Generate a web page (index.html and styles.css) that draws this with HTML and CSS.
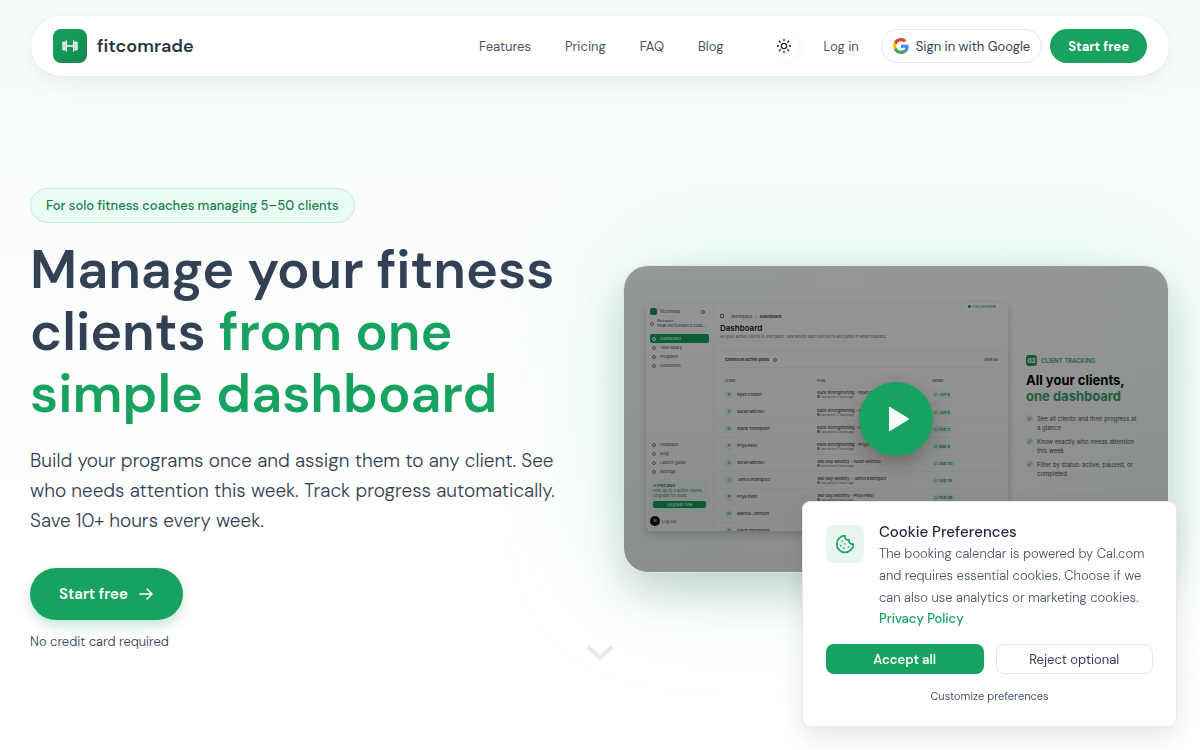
FILE: index.html
```html
<!DOCTYPE html>
<html lang="en">
<head>
<meta charset="utf-8">
<meta name="viewport" content="width=device-width, initial-scale=1">
<title>fitcomrade</title>
<link rel="stylesheet" href="styles.css">
</head>
<body>
<header class="nav">
  <a class="brand" href="#">
    <span class="brand-mark">
      <svg width="18" height="14" viewBox="0 0 18 14" fill="none" stroke="#fff" stroke-width="1.3" stroke-linejoin="round" stroke-linecap="round"><path d="M6 7h6"/><path d="M2 3.500h2v7H2z M14 3.500h2v7h-2z" fill="#fff" fill-opacity=".3"/><path d="M5.300 2v10M12.700 2v10"/></svg>
    </span>
    <span>fitcomrade</span>
  </a>
  <nav class="links">
    <a href="#">Features</a>
    <a href="#">Pricing</a>
    <a href="#">FAQ</a>
    <a href="#">Blog</a>
  </nav>
  <div class="actions">
    <button class="theme" type="button" aria-label="Toggle theme">
      <svg width="16" height="16" viewBox="0 0 24 24" fill="none" stroke="#1e293b" stroke-width="2" stroke-linecap="round"><circle cx="12" cy="12" r="4"/><path d="M12 2v2M12 20v2M4.900 4.900l1.400 1.400M17.700 17.700l1.400 1.400M2 12h2M20 12h2M4.900 19.100l1.400-1.400M17.700 6.300l1.400-1.400"/></svg>
    </button>
    <a class="login" href="#">Log in</a>
    <button class="google" type="button">
      <svg width="16" height="16" viewBox="0 0 24 24"><path fill="#4285F4" d="M23.500 12.300c0-.9-.1-1.500-.2-2.200H12v4.500h6.600c-.1 1.100-.9 2.800-2.500 3.900l3.900 3c2.200-2.100 3.500-5.200 3.500-9.200z"/><path fill="#34A853" d="M12 24c3.200 0 6-1.100 7.900-2.900l-3.800-3c-1 .7-2.400 1.200-4.100 1.200-3.200 0-5.900-2.100-6.800-5l-4 3.100C3.200 21.300 7.300 24 12 24z"/><path fill="#FBBC05" d="M5.200 14.300c-.2-.7-.4-1.500-.4-2.300s.1-1.600.4-2.300l-4-3.100C.4 8.200 0 10.100 0 12s.5 3.800 1.300 5.400z"/><path fill="#EA4335" d="M12 4.700c2.300 0 3.800 1 4.700 1.800l3.400-3.300C18 1.200 15.200 0 12 0 7.300 0 3.200 2.700 1.300 6.600l4 3.100c.9-2.900 3.500-5 6.700-5z"/></svg>
      <span>Sign in with Google</span>
    </button>
    <a class="start-small" href="#">Start free</a>
  </div>
</header>

<main class="hero">
  <section class="copy">
    <p class="badge">For solo fitness coaches managing 5–50 clients</p>
    <h1>Manage your fitness clients <em>from one simple dashboard</em></h1>
    <p class="lead">Build your programs once and assign them to any client. See who needs attention this week. Track progress automatically. Save 10+ hours every week.</p>
    <a class="start" href="#">Start free
      <svg width="16" height="16" viewBox="0 0 16 16" fill="none" stroke="#fff" stroke-width="1.500" stroke-linecap="round" stroke-linejoin="round"><path d="M2 8h12M9 3l5 5-5 5"/></svg>
    </a>
    <p class="note">No credit card required</p>
  </section>

  <section class="poster" aria-label="Product video">
    <div class="scene">
      <div class="app">
        <aside class="side">
          <div class="side-brand"><i class="logo"></i>fitcomrade<i class="dot"></i></div>
          <div class="side-team"><i class="dot"></i><div><small>Workspace</small>Peak Performance Coac...</div></div>
          <div class="side-item active"><i class="dot"></i>Dashboard</div>
          <div class="side-item"><i class="dot"></i>Task library</div>
          <div class="side-item"><i class="dot"></i>Programs</div>
          <div class="side-item"><i class="dot"></i>Customers</div>
          <div class="side-foot">
            <div class="side-item"><i class="dot"></i>Feedback</div>
            <div class="side-item"><i class="dot"></i>Blog</div>
            <div class="side-item"><i class="dot"></i>Launch guide</div>
            <div class="side-item"><i class="dot"></i>Settings</div>
            <div class="plan">
              <b>✧ Free plan</b>
              <span>Free up to 3 active clients. Upgrade for more.</span>
              <div class="upgrade">Upgrade now</div>
            </div>
            <div class="side-user"><i>N</i>Log out</div>
          </div>
        </aside>
        <div class="main">
          <div class="crumbs"><i class="box"></i>Workspace <span>/</span> <b>Dashboard</b></div>
          <div class="main-title">Dashboard</div>
          <div class="main-sub">All your active clients in one place. See where each person is and jump in when needed.</div>
          <div class="main-head"><b>Clients on active plans</b><i class="dot"></i><span>View all</span></div>
          <table class="rows">
            <thead><tr><th>CLIENT</th><th>PLAN</th><th>ENDING</th></tr></thead>
            <tbody>
              <tr><td><i>R</i>Ryan Cooper</td><td>Back Strengthening - Ryan Cooper<small>● Last active 2 hours ago</small></td><td><u>☑ Jun 9</u></td></tr>
              <tr><td><i>S</i>Sarah Mitchell</td><td>Back Strengthening - Sarah Mitchell<small>● Last active 2 hours ago</small></td><td><u>☑ Jun 9</u></td></tr>
              <tr><td><i>D</i>David Thompson</td><td>Back Strengthening - David Thomp<small>● Last active 2 hours ago</small></td><td><u>☑ Feb 11</u></td></tr>
              <tr><td><i>P</i>Priya Patel</td><td>Back Strengthening - Priya Patel<small>● Last active 2 hours ago</small></td><td><u>☑ Mar 9</u></td></tr>
              <tr><td><i>S</i>Sarah Mitchell</td><td>360 Day Mobility - Sarah Mitchell<small>● Last active 2 hours ago</small></td><td><u>☑ Sep 30</u></td></tr>
              <tr><td><i>J</i>James Rodriguez</td><td>360 Day Mobility - James Rodriguez<small>● Last active 2 hours ago</small></td><td><u>☑ Sep 19</u></td></tr>
              <tr><td><i>P</i>Priya Patel</td><td>360 Day Mobility - Priya Patel<small>● Last active 2 hours ago</small></td><td><u>☑ Feb 26</u></td></tr>
              <tr><td><i>M</i>Marcus Johnson</td><td></td><td></td></tr>
              <tr><td><i>D</i>David Thompson</td><td></td><td></td></tr>
            </tbody>
          </table>
        </div>
        <div class="live">● Live preview</div>
      </div>
      <div class="pitch">
        <div class="step"><b>02</b>CLIENT TRACKING</div>
        <h2>All your clients,<br><em>one dashboard</em></h2>
        <ul>
          <li>See all clients and their progress at a glance</li>
          <li>Know exactly who needs attention this week</li>
          <li>Filter by status: active, paused, or completed</li>
        </ul>
      </div>
    </div>
    <button class="play" type="button" aria-label="Play video">
      <svg width="22" height="26" viewBox="0 0 22 26"><path d="M1 1.500v23q0 1 1 .5L20.500 13.700q1-.7 0-1.400L2 1q-1-.5-1 .5z" fill="#fff"/></svg>
    </button>
  </section>
  <svg class="more" width="28" height="18" viewBox="0 0 28 18" fill="none" stroke="#e8eaea" stroke-width="4"><path d="M2 3l12 11L26 3"/></svg>
</main>

<section class="cookie" aria-labelledby="cookie-title">
  <div class="cookie-top">
    <span class="cookie-icon">
      <svg width="20" height="20" viewBox="0 0 24 24" fill="none" stroke="#16a35f" stroke-width="2" stroke-linecap="round" stroke-linejoin="round"><path d="M12 2a10 10 0 1 0 10 10 4 4 0 0 1-5-5 4 4 0 0 1-5-5"/><path d="M8.500 8.500v.01M16 15.500v.01M12 12v.01M11 17v.01M7 14v.01"/></svg>
    </span>
    <div>
      <h3 id="cookie-title">Cookie Preferences</h3>
      <p>The booking calendar is powered by Cal.com and requires essential cookies. Choose if we can also use analytics or marketing cookies.</p>
      <a href="#">Privacy Policy</a>
    </div>
  </div>
  <div class="cookie-buttons">
    <button class="accept" type="button">Accept all</button>
    <button class="reject" type="button">Reject optional</button>
  </div>
  <button class="customize" type="button">Customize preferences</button>
</section>
</body>
</html>
```
FILE: styles.css
```css
* { box-sizing: border-box; }

body {
  margin: 0;
  min-height: 100vh;
  font-family: "DM Sans", Inter, "Open Sans", sans-serif;
  font-variant-ligatures: none;
  color: #334155;
  background: linear-gradient(#f5faf9 0, #fafdfc 200px, #fdfefe 400px, #fff 600px) no-repeat;
}

h1, h2, h3, p, ul { margin: 0; }
a { color: inherit; text-decoration: none; }
button { font: inherit; color: inherit; cursor: pointer; }
em, i { font-style: normal; }

/* Navigation */
.nav {
  margin: 16px 31px 0;
  height: 60px;
  padding: 0 22px;
  display: flex;
  align-items: center;
  background: #fff;
  border-radius: 30px;
  box-shadow: 0 8px 20px rgba(15, 60, 50, .06), 0 0 1px rgba(15, 60, 50, .15);
  font-size: 13px;
  color: #475569;
}
.brand {
  display: flex;
  align-items: center;
  gap: 10px;
  margin-right: auto;
  font-size: 18px;
  font-weight: 600;
  color: #283548;
}
.brand-mark {
  width: 34px;
  height: 34px;
  display: grid;
  place-items: center;
  border-radius: 8px;
  background: linear-gradient(135deg, #16a35f, #15884f);
}
.links { display: flex; gap: 34px; margin-right: 46px; }
.actions { display: flex; align-items: center; }
.theme {
  width: 30px;
  height: 30px;
  padding: 0;
  margin-right: 24px;
  display: grid;
  place-items: center;
  border: 0;
  border-radius: 15px;
  background: none;
  box-shadow: 2px 2px 4px rgba(80, 90, 130, .04);
}
.login { margin-right: 22px; }
.google {
  height: 34px;
  padding: 0 11px;
  margin-right: 8px;
  display: flex;
  align-items: center;
  gap: 7px;
  border: 1px solid #e2e8f0;
  border-radius: 17px;
  background: #fff;
  color: #334155;
}
.start-small {
  height: 34px;
  padding: 0 18px;
  display: flex;
  align-items: center;
  border-radius: 17px;
  background: #18a25f;
  color: #fff;
  font-weight: 700;
}

/* Hero */
.hero {
  position: relative;
  padding: 112px 32px 98px 30px;
  display: grid;
  grid-template-columns: 1fr 1fr;
  gap: 50px;
  align-items: center;
}
.copy { display: flex; flex-direction: column; align-items: flex-start; }
.badge {
  padding: 0 15px;
  border: 1px solid #c5ebd9;
  border-radius: 18px;
  background: #eafbf3;
  color: #15804c;
  font-size: 13px;
  font-weight: 500;
  line-height: 33px;
}
h1 {
  margin-top: 16px;
  font-size: 54px;
  font-weight: 600;
  line-height: 62px;
}
h1 em { color: #18a25f; }
.lead {
  max-width: 540px;
  margin-top: 21px;
  font-size: 19px;
  font-weight: 300;
  line-height: 30px;
  color: #334155;
}
.start {
  height: 52px;
  margin-top: 32px;
  padding: 0 29px;
  display: flex;
  align-items: center;
  gap: 10px;
  border-radius: 26px;
  background: #18a25f;
  box-shadow: 0 6px 12px rgba(24, 162, 95, .25);
  color: #fff;
  font-size: 15px;
  font-weight: 600;
}
.note { margin-top: 14px; font-size: 13px; font-weight: 300; line-height: 16px; color: #334155; }
.more { position: absolute; left: calc(50% - 14px); bottom: 86px; }

/* Video poster */
.poster {
  position: relative;
  aspect-ratio: 16 / 9;
  border-radius: 24px;
  box-shadow: 0 0 0 1px #e0e8e6, 0 20px 40px rgba(20, 60, 45, .2), 0 0 120px rgba(120, 220, 175, .28);
}
.scene {
  height: 100%;
  padding: 37px 22px 41px;
  display: flex;
  gap: 18px;
  overflow: hidden;
  position: relative;
  border-radius: 24px;
  background: linear-gradient(100deg, #edf6f5, #f3f3f3 45%, #f3f3f3 70%, #e8f4ee);
  font-family: Inter, sans-serif;
  font-size: 4px;
  line-height: 5px;
  color: #444;
}
.scene::after {
  content: "";
  position: absolute;
  inset: 0;
  background: linear-gradient(rgba(0, 0, 0, .38), rgba(0, 0, 0, .42));
}
.app {
  position: relative;
  flex: 0 0 362px;
  display: flex;
  border-radius: 4px;
  background: #eff0f0;
  box-shadow: 0 3px 8px rgba(0, 0, 0, .2);
}
.dot { flex: none; width: 4px; height: 4px; border: 1px solid #777; border-radius: 2px; }
.side { width: 68px; padding: 5px 4px; display: flex; flex-direction: column; border-right: 1px solid #e6e9e8; }
.side-brand { display: flex; align-items: center; gap: 3px; }
.side-brand .dot { margin: 0 4px 0 auto; }
.logo { width: 7px; height: 7px; border-radius: 2px; background: #168a52; }
.side-team { display: flex; align-items: center; gap: 3px; height: 12px; margin: 3px 0 4px; white-space: nowrap; }
.side-team small { display: block; font-size: 3px; line-height: 3px; }
.side-item { display: flex; align-items: center; gap: 4px; height: 9px; padding: 0 2px; border-radius: 2px; }
.side-item.active { background: #12975a; color: #fff; }
.side-item.active .dot { border-color: #fff; }
.side-foot { margin-top: auto; }
.plan { margin: 3px 0 4px; padding: 4px 3px; border-radius: 3px; background: #e2f1e9; color: #43705a; }
.plan b, .plan span { display: block; }
.upgrade { margin-top: 3px; line-height: 7px; border-radius: 2px; background: #12975a; color: #fff; text-align: center; }
.side-user { display: flex; align-items: center; gap: 2px; }
.side-user i { width: 10px; line-height: 10px; border-radius: 5px; background: #111; color: #fff; text-align: center; }
.main { flex: 1; min-width: 0; padding: 11px 5px 0 6px; overflow: hidden; }
.crumbs { display: flex; gap: 3px; }
.box { width: 4px; height: 4px; border: 1px solid #777; margin-right: 4px; }
.main-title { margin-top: 4px; font-size: 8px; line-height: 10px; font-weight: 600; color: #111; }
.main-sub { line-height: 7px; color: #666; }
.main-head { display: flex; align-items: center; gap: 4px; margin-top: 11px; height: 16px; padding: 0 5px; border-top: 1px solid #e5e9e8; }
.main-head span { margin-left: auto; }
.rows { width: 100%; border-collapse: collapse; table-layout: fixed; white-space: nowrap; }
.rows th { height: 19px; padding: 8px 5px 0; text-align: left; font-size: 3px; font-weight: 500; border-top: 1px solid #e5e9e8; }
.rows th:nth-child(1) { width: 92px; }
.rows th:nth-child(2) { width: 115px; }
.rows td { height: 17px; padding: 0 5px; border-bottom: 1px solid #e6e8e7; font-weight: 500; }
.rows i { display: inline-block; width: 8px; margin-right: 4px; line-height: 8px; border-radius: 4px; background: #d9ebe2; color: #3a8a63; text-align: center; }
.rows small { display: block; font-size: 3px; line-height: 4px; color: #777; }
.rows u { text-decoration: none; padding: 1px 2px; border-radius: 3px; background: #dcefe5; color: #187a4b; }
.live { position: absolute; right: 9px; top: 0; padding: 1px 3px; border-radius: 4px; background: #f2f8f5; color: #168a52; }
.pitch { flex: 1; padding-top: 52px; }
.step { display: flex; align-items: center; gap: 4px; font-size: 6px; line-height: 11px; font-weight: 600; color: #3e9b6f; white-space: nowrap; }
.step b { width: 11px; border-radius: 3px; background: #23935c; color: #e6f5ed; text-align: center; }
.pitch h2 { margin-top: 6px; font-size: 13px; line-height: 16px; font-weight: 700; color: #000; white-space: nowrap; }
.pitch h2 em { color: #2f9a67; }
.pitch ul { margin-top: 10px; padding: 0; list-style: none; font-size: 6px; line-height: 9px; color: #4a4f4d; }
.pitch li { position: relative; width: 115px; margin-bottom: 5px; padding-left: 11px; }
.pitch li::before { content: "✓"; position: absolute; left: 0; top: 1px; width: 7px; line-height: 7px; border-radius: 4px; background: #c9e8d8; color: #168a52; text-align: center; }
.play {
  position: absolute;
  left: calc(50% - 37px);
  top: calc(50% - 37px);
  width: 74px;
  height: 74px;
  padding: 0 0 0 6px;
  display: grid;
  place-items: center;
  border: 0;
  border-radius: 37px;
  background: #18a25f;
  box-shadow: 0 8px 20px rgba(0, 0, 0, .25);
}

/* Cookie dialog */
.cookie {
  position: fixed;
  right: 23px;
  bottom: 23px;
  width: 375px;
  padding: 21px 23px 20px;
  border: 1px solid #e5e9ee;
  border-radius: 8px;
  background: #fff;
  box-shadow: 0 10px 24px rgba(15, 23, 42, .1);
}
.cookie-top { display: flex; gap: 15px; }
.cookie-icon { flex: none; width: 38px; height: 38px; margin-top: 2px; display: grid; place-items: center; border-radius: 8px; background: #e8f6ef; }
.cookie h3 { padding-bottom: 2px; font-size: 15px; line-height: 18px; font-weight: 500; color: #1e293b; }
.cookie p { font-size: 13px; font-weight: 300; line-height: 22px; color: #475569; }
.cookie-top a { display: block; font-size: 13px; line-height: 20px; font-weight: 500; color: #18a25f; }
.cookie-buttons { display: grid; grid-template-columns: 1fr 1fr; gap: 12px; margin-top: 15px; }
.cookie-buttons button { height: 30px; padding: 0; border-radius: 8px; font-size: 13px; }
.accept { border: 0; background: #18a25f; color: #fff; font-weight: 600; }
.reject { border: 1px solid #e2e8f0; background: #fff; color: #334155; }
.customize { display: block; margin: 12px auto 0; padding: 0; border: 0; background: none; font-size: 11px; line-height: 20px; color: #475569; }
```
